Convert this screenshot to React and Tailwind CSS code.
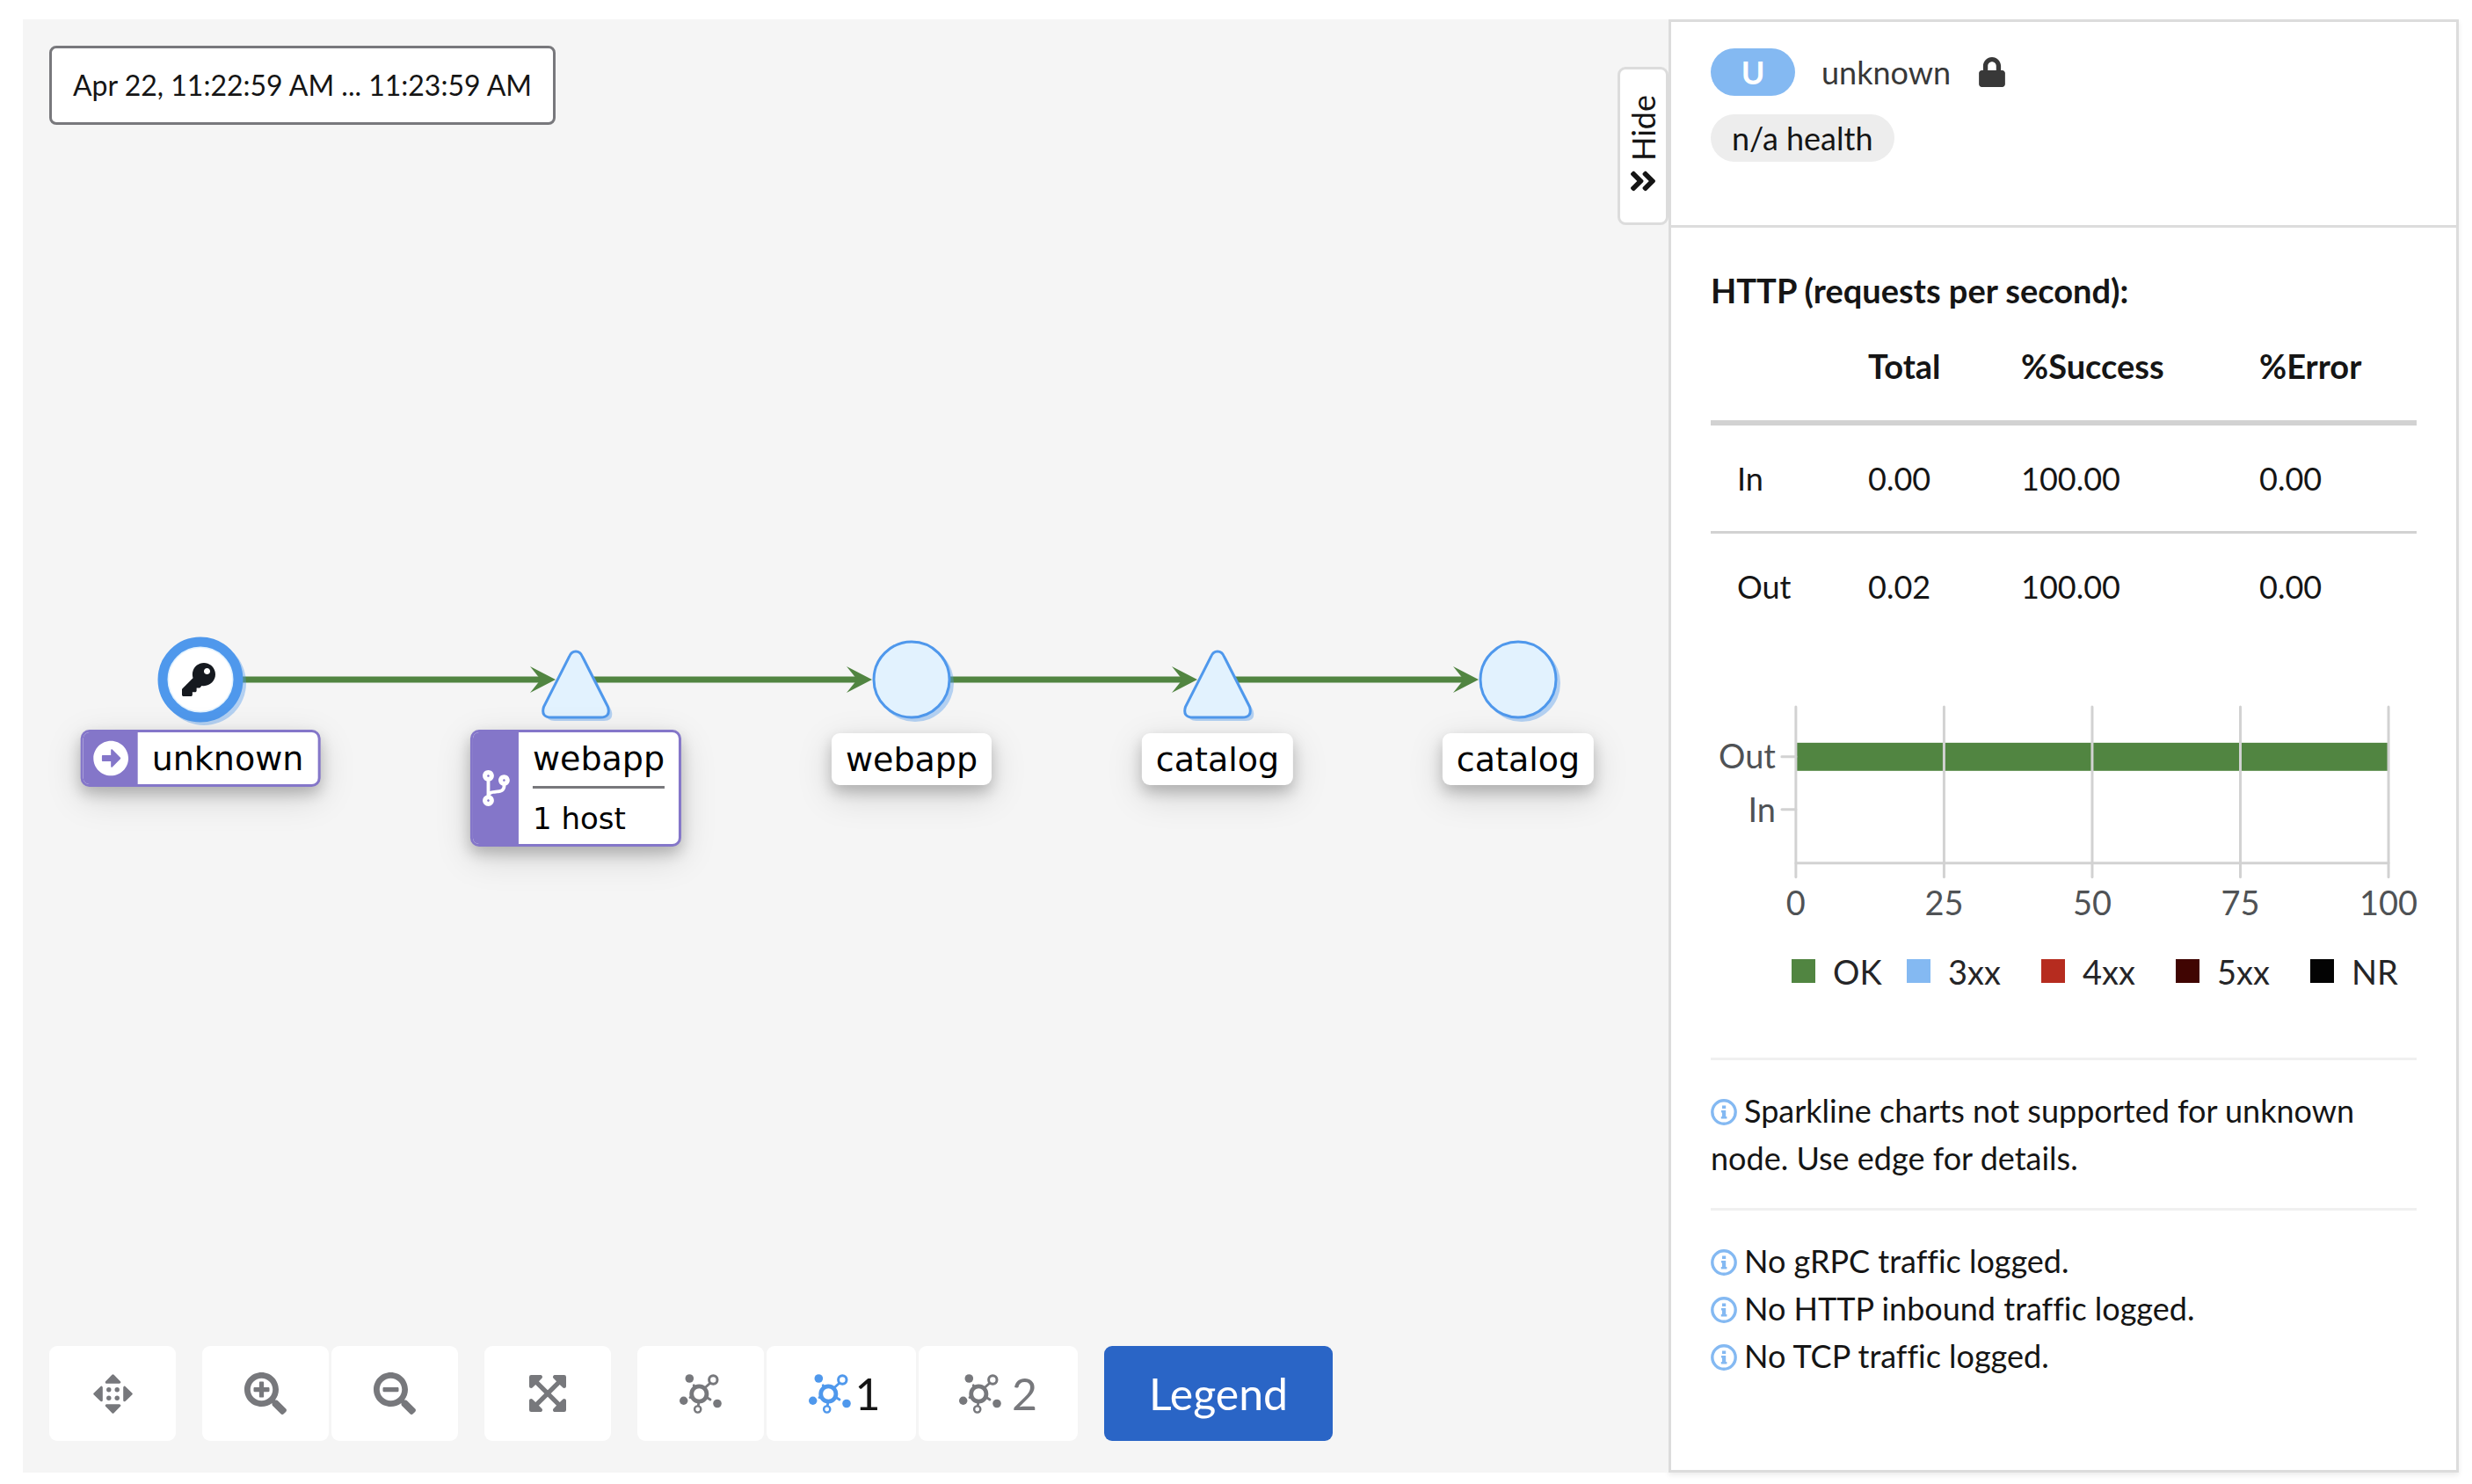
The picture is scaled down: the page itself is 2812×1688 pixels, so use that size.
import React from "react";
import {
  FaAngleDoubleRight,
  FaArrowAltCircleRight,
  FaCodeBranch,
  FaExpandArrowsAlt,
  FaKey,
  FaLock,
  FaSearchMinus,
  FaSearchPlus,
} from "react-icons/fa";

const NODE_Y = 751;

const nodes = [
  { id: "n1", shape: "key", x: 202, label: "unknown", badge: "source" },
  { id: "n2", shape: "triangle", x: 629, label: "webapp", badge: "branch", detail: "1 host" },
  { id: "n3", shape: "circle", x: 1011, label: "webapp" },
  { id: "n4", shape: "triangle", x: 1359, label: "catalog" },
  { id: "n5", shape: "circle", x: 1701, label: "catalog" },
];

const edges = [
  { from: 202, to: 606 },
  { from: 629, to: 966 },
  { from: 1011, to: 1336 },
  { from: 1359, to: 1656 },
];

const rates = [
  { name: "In", total: "0.00", success: "100.00", error: "0.00" },
  { name: "Out", total: "0.02", success: "100.00", error: "0.00" },
];

const legend = [
  { name: "OK", width: "w-[131px]", color: "bg-[#518541]" },
  { name: "3xx", width: "w-[153px]", color: "bg-[#84b9f2]" },
  { name: "4xx", width: "w-[153px]", color: "bg-[#b62c1f]" },
  { name: "5xx", width: "w-[153px]", color: "bg-[#400502]" },
  { name: "NR", width: "w-[120px]", color: "bg-[#030303]" },
];

function TopologyIcon({ className = "" }) {
  return (
    <svg viewBox="0 0 48 45" className={`h-[45px] w-12 shrink-0 ${className}`} fill="none" stroke="currentColor" aria-hidden="true">
      <g fill="currentColor" stroke="none">
        <circle cx="11.3" cy="5" r="4.8" />
        <circle cx="4.7" cy="30.3" r="4.7" />
        <circle cx="43" cy="33.5" r="4.8" />
      </g>
      <circle cx="22.3" cy="22.5" r="8.6" strokeWidth="4.8" />
      <circle cx="38.3" cy="6.5" r="4.7" strokeWidth="3" />
      <circle cx="20.7" cy="40" r="3.6" strokeWidth="2.4" />
      <g strokeWidth="2.8" strokeLinecap="round">
        <path d="M29 15.5L34.5 10.5" />
        <path d="M16.2 12.8L18 15" />
        <path d="M31 26.5L35 29" />
        <path d="M12 26.6L13.5 26" />
        <path d="M21.7 33L21.4 35.5" />
      </g>
    </svg>
  );
}

function PanIcon() {
  return (
    <svg viewBox="0 0 45 45" className="size-[45px]" fill="currentColor" aria-hidden="true">
      <g stroke="currentColor" strokeWidth="3" strokeLinejoin="round">
        <path d="M22.5 1.8L29.8 9.3H15.2Z" />
        <path d="M22.5 43.2L29.8 35.7H15.2Z" />
        <path d="M1.8 22.5L9.3 15.2V29.8Z" />
        <path d="M43.2 22.5L35.7 15.2V29.8Z" />
      </g>
      <circle cx="17.8" cy="17.8" r="2.7" />
      <circle cx="27.2" cy="17.8" r="2.7" />
      <circle cx="17.8" cy="27.2" r="2.7" />
      <circle cx="27.2" cy="27.2" r="2.7" />
    </svg>
  );
}

function InfoIcon() {
  return (
    <svg viewBox="0 0 30 30" className="mr-2 inline-block size-[30px] align-[-3px] text-[#84b9f2]" aria-hidden="true">
      <circle cx="15" cy="15" r="13.2" fill="none" stroke="currentColor" strokeWidth="3.4" />
      <path fill="currentColor" d="M13 7.5h4.2v3.6H13zM12 13h5.2v7h1.2v2.4H11.8V20H13v-4.6h-1z" />
    </svg>
  );
}

function NodeShape({ node }) {
  const place = `translate(${node.x} ${NODE_Y})`;
  const triangle = "M-7.5 -26C-4.5 -34 4.5 -34 7.5 -26L36.5 31Q40 43 28 43H-28Q-40 43 -36.5 31Z";
  if (node.shape === "triangle") {
    return (
      <g transform={place}>
        <path d={triangle} fill="#4f98ec" opacity="0.4" transform="translate(4 4)" />
        <path d={triangle} fill="#e2f2fe" stroke="#4f98ec" strokeWidth="3" />
      </g>
    );
  }
  const selected = node.shape === "key";
  return (
    <g transform={place}>
      <circle r={selected ? 48 : 44} cx="4" cy="4" fill="#4f98ec" opacity="0.4" />
      <circle r="43" fill="#e2f2fe" stroke="#4f98ec" strokeWidth={selected ? 11 : 3} />
      {selected && (
        <>
          <circle r="36" fill="#fff" />
          <FaKey x="-21" y="-19" width="41" height="41" color="#15191f" />
        </>
      )}
    </g>
  );
}

function NodeLabel({ node }) {
  const at = { left: node.x, top: node.badge ? 808 : 812 };
  const shadow = "shadow-[0_8px_16px_rgba(0,0,0,0.2),0_12px_40px_rgba(0,0,0,0.15)]";
  if (!node.badge) {
    return (
      <div style={at} className={`absolute -translate-x-1/2 rounded-[9px] bg-white px-4 pt-2 pb-1.5 leading-[45px] ${shadow}`}>
        {node.label}
      </div>
    );
  }
  return (
    <div style={at} className={`absolute flex -translate-x-1/2 overflow-hidden rounded-[10px] border-[3px] border-[#8476c9] bg-white whitespace-nowrap ${shadow}`}>
      <div className={`flex items-center justify-center bg-[#8476c9] text-white ${node.badge === "source" ? "w-[62px]" : "w-[52px]"}`}>
        {node.badge === "source" ? <FaArrowAltCircleRight size={41} /> : <FaCodeBranch size={41} />}
      </div>
      <div className="px-4 pt-2 pb-1.5 leading-[45px]">
        <div>{node.label}</div>
        {node.detail && (
          <div className="mt-2 border-t-[3px] border-[#78787c] pt-3 text-[34px]">{node.detail}</div>
        )}
      </div>
    </div>
  );
}

function Graph() {
  return (
    <div className="pointer-events-none absolute inset-0 font-['DejaVu_Sans',sans-serif] text-[38px] text-black">
      <svg className="absolute inset-0 size-full" role="img" aria-label="Traffic graph">
        {edges.map((e) => (
          <g key={e.from} fill="#518541">
            <path d={`M${e.from} ${NODE_Y}H${e.to - 15}`} stroke="#518541" strokeWidth="7" />
            <path d={`M${e.to} ${NODE_Y}l-29 -15l12 15l-12 15Z`} />
          </g>
        ))}
        {nodes.map((n) => (
          <NodeShape key={n.id} node={n} />
        ))}
      </svg>
      {nodes.map((n) => (
        <NodeLabel key={n.id} node={n} />
      ))}
    </div>
  );
}

function ToolButton({ label, className = "w-36 gap-3", children }) {
  return (
    <button type="button" aria-label={label} className={`flex h-[108px] items-center justify-center rounded-[9px] bg-white text-[#77787c] ${className}`}>
      {children}
    </button>
  );
}

function Toolbar() {
  return (
    <div className="relative flex gap-[30px] text-[50px]">
      <ToolButton label="Drag"><PanIcon /></ToolButton>
      <div className="flex gap-[3px]">
        <ToolButton label="Zoom in"><FaSearchPlus size={48} /></ToolButton>
        <ToolButton label="Zoom out"><FaSearchMinus size={48} /></ToolButton>
      </div>
      <ToolButton label="Zoom to fit"><FaExpandArrowsAlt size={48} /></ToolButton>
      <div className="flex gap-[3px]">
        <ToolButton label="Default layout"><TopologyIcon /></ToolButton>
        <ToolButton label="Layout 1" className="w-[170px] gap-1 pl-2">
          <TopologyIcon className="text-[#4f98ec]" />
          <span className="text-[#151515]">1</span>
        </ToolButton>
        <ToolButton label="Layout 2" className="w-[181px] gap-3">
          <TopologyIcon />
          <span>2</span>
        </ToolButton>
      </div>
      <button type="button" className="h-[108px] w-[260px] rounded-[9px] bg-[#2a65c6] text-white">Legend</button>
    </div>
  );
}

function RateChart() {
  const ticks = [0, 25, 50, 75, 100];
  return (
    <svg viewBox="0 0 804 333" className="w-full overflow-visible text-[38px]" role="img" aria-label="Requests by status code">
      <rect x="97" y="118" width="675" height="32" fill="#518541" />
      <g stroke="#d2d2d2" strokeWidth="3" strokeLinecap="round">
        {ticks.map((t) => (
          <path key={t} d={`M${97 + t * 6.75} 77V271`} />
        ))}
        <path d="M97 255H772M81 134H97M81 194H97" />
      </g>
      <g fill="#4f5255">
        <text x="74" y="147" textAnchor="end">Out</text>
        <text x="74" y="208" textAnchor="end">In</text>
        {ticks.map((t) => (
          <text key={t} x={97 + t * 6.75} y="314" textAnchor="middle">{t}</text>
        ))}
      </g>
    </svg>
  );
}

function SidePanel() {
  return (
    <aside className="w-[899px] shrink-0 border-[3px] border-[#dcdcdc] bg-white shadow-[0_3px_6px_rgba(0,0,0,0.08)]">
      <header className="flex h-[234px] flex-col items-start gap-[21px] border-b-[3px] border-[#dcdcdc] px-[45px] pt-[30px]">
        <div className="flex items-center text-[#383838]">
          <span className="w-24 rounded-full bg-[#84b9f2] text-center font-bold text-white">U</span>
          <span className="ml-[30px]">unknown</span>
          <FaLock size={34} className="ml-[30px]" />
        </div>
        <span className="rounded-full bg-[#ededed] px-6">n/a health</span>
      </header>
      <div className="px-[45px] pt-11">
        <h2 className="text-[38px] font-bold">HTTP (requests per second):</h2>
        <table className="w-full table-fixed border-separate border-spacing-0 text-left">
          <thead className="text-[38px]">
            <tr className="h-[127px] [&>*]:border-b-[6px] [&>*]:border-[#d2d2d2] [&>*]:pb-1 [&>*]:pl-[30px]">
              <td className="w-[149px]" />
              <th scope="col" className="w-[174px]">Total</th>
              <th scope="col" className="w-[271px]">%Success</th>
              <th scope="col">%Error</th>
            </tr>
          </thead>
          <tbody>
            {rates.map((r) => (
              <tr key={r.name} className="h-[123px] last:h-[120px] [&>td]:border-[#d2d2d2] [&>td]:pl-[30px] [&:not(:last-child)>td]:border-b-[3px]">
                <td>{r.name}</td>
                <td>{r.total}</td>
                <td>{r.success}</td>
                <td>{r.error}</td>
              </tr>
            ))}
          </tbody>
        </table>
        <RateChart />
        <ul className="mt-[18px] ml-[92px] flex text-[38px] text-[#252527]">
          {legend.map((l) => (
            <li key={l.name} className={`flex shrink-0 items-center gap-5 ${l.width}`}>
              <span className={`size-[27px] ${l.color}`} />
              {l.name}
            </li>
          ))}
        </ul>
        <hr className="mt-[71px] mb-[30px] border-t-[3px] border-[#f0f0f0]" />
        <p><InfoIcon />Sparkline charts not supported for unknown node. Use edge for details.</p>
        <hr className="my-[30px] border-t-[3px] border-[#f0f0f0]" />
        <p><InfoIcon />No gRPC traffic logged.</p>
        <p><InfoIcon />No HTTP inbound traffic logged.</p>
        <p><InfoIcon />No TCP traffic logged.</p>
      </div>
    </aside>
  );
}

export default function App() {
  return (
    <div className="flex min-h-screen bg-white pt-[22px] pr-[15px] pb-[13px] pl-[26px] font-[Lato,sans-serif] text-[36px] leading-[54px] text-[#151515] [font-variant-ligatures:none]">
      <main className="relative flex flex-1 flex-col items-start justify-between bg-[#f5f5f5] px-[30px] pt-[30px] pb-9">
        <Graph />
        <div className="relative rounded-lg border-[3px] border-[#78787c] bg-white px-6 py-[15px] text-[32px]">
          Apr 22, 11:22:59 AM ... 11:23:59 AM
        </div>
        <button type="button" className="absolute top-[54px] right-0 flex h-[180px] w-[58px] flex-col items-center justify-center gap-1 rounded-[9px] border-[3px] border-[#dcdcdc] bg-white">
          <span className="rotate-180 [writing-mode:vertical-rl]">Hide</span>
          <FaAngleDoubleRight size={36} />
        </button>
        <Toolbar />
      </main>
      <SidePanel />
    </div>
  );
}
